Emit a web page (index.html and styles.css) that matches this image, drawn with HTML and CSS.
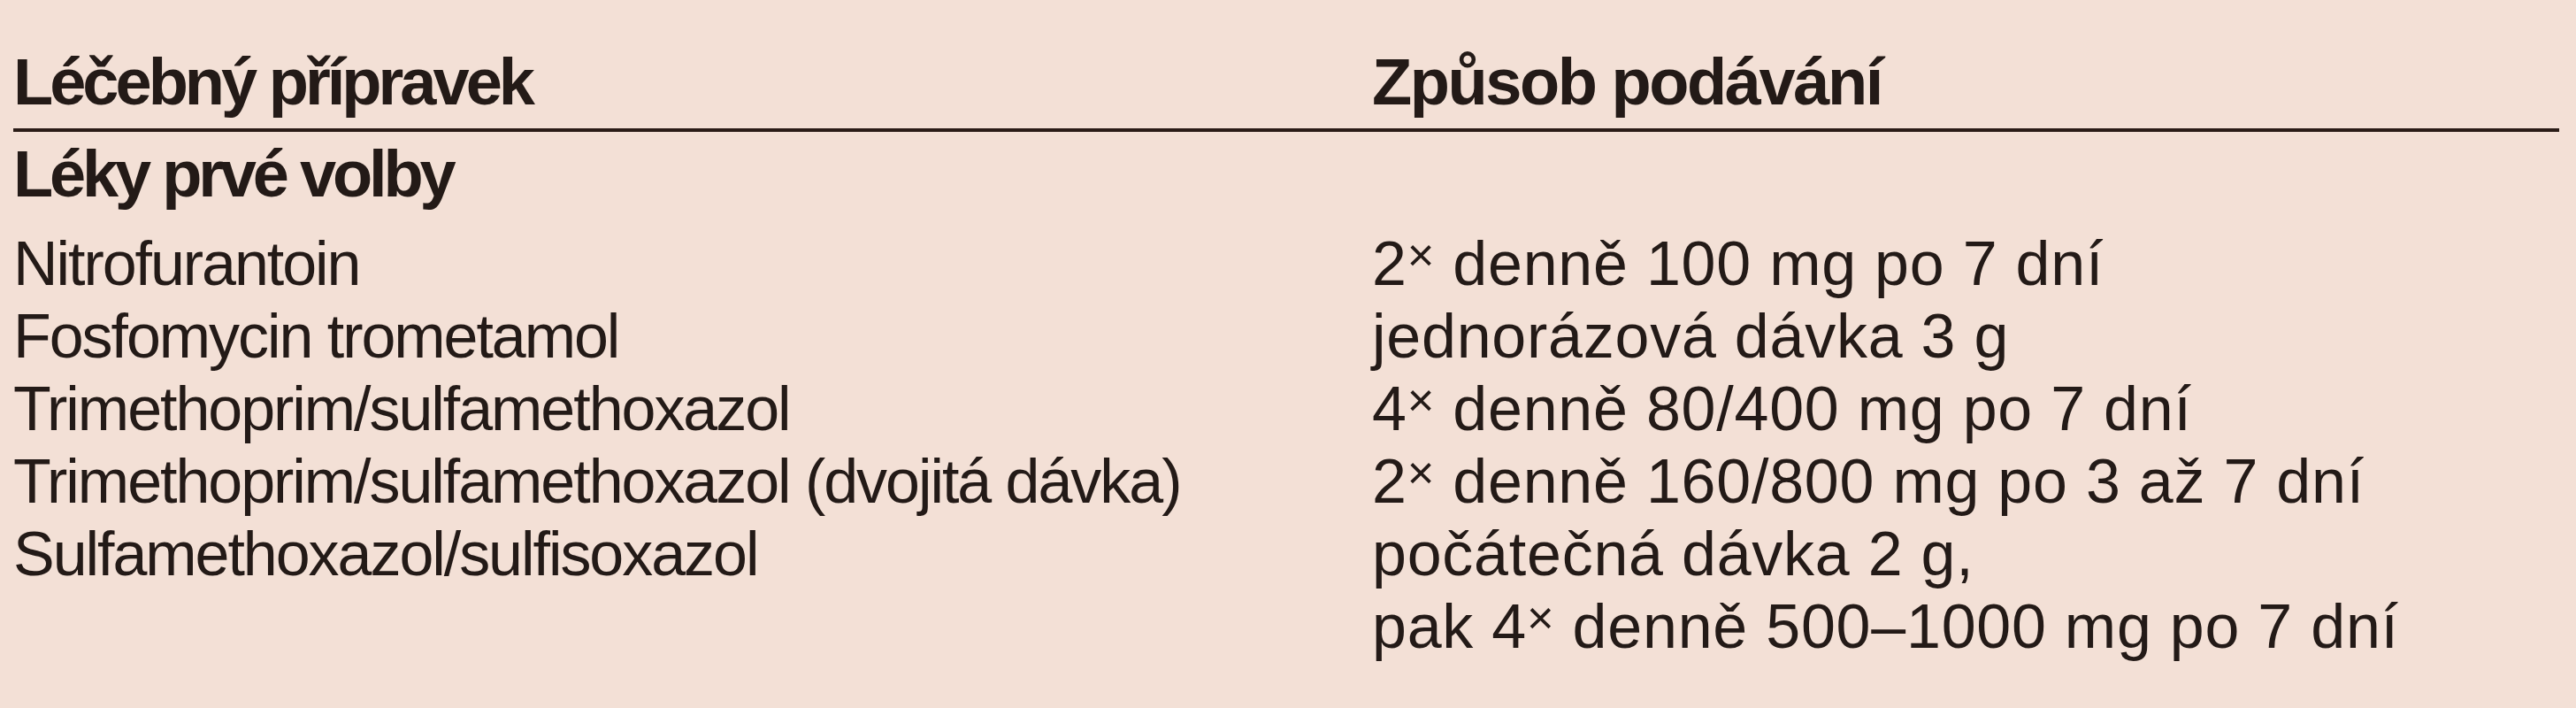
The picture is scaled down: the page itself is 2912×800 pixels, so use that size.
FILE: index.html
```html
<!DOCTYPE html>
<html lang="cs">
<head>
<meta charset="utf-8">
<title>Léčebný přípravek</title>
<link rel="stylesheet" href="styles.css">
</head>
<body>
<div class="table">
  <div class="grid head">
    <div class="cell head-left">Léčebný přípravek</div>
    <div class="cell head-right">Způsob podávání</div>
  </div>
  <div class="section">Léky prvé volby</div>
  <div class="grid body">
    <div class="cell drug">Nitrofurantoin</div>
    <div class="cell dose">2<span class="times">×</span> denně 100 mg po 7 dní</div>
    <div class="cell drug">Fosfomycin trometamol</div>
    <div class="cell dose">jednorázová dávka 3 g</div>
    <div class="cell drug">Trimethoprim/sulfamethoxazol</div>
    <div class="cell dose">4<span class="times">×</span> denně 80/400 mg po 7 dní</div>
    <div class="cell drug">Trimethoprim/sulfamethoxazol (dvojitá dávka)</div>
    <div class="cell dose">2<span class="times">×</span> denně 160/800 mg po 3 až 7 dní</div>
    <div class="cell drug">Sulfamethoxazol/sulfisoxazol</div>
    <div class="cell dose">počátečná dávka 2 g,<br>pak 4<span class="times">×</span> denně 500–1000 mg po 7 dní</div>
  </div>
</div>
</body>
</html>
```
FILE: styles.css
```css
html, body {
  margin: 0;
  padding: 0;
  background: #f3e0d6;
}
body {
  width: 2912px;
  height: 800px;
  overflow: hidden;
  color: #231a17;
  font-family: "Liberation Sans", Arial, sans-serif;
}
.table {
  padding: 0 19px 0 15px;
}
.grid {
  display: grid;
  grid-template-columns: 1536px 1fr;
}
.cell {
  white-space: nowrap;
}
.head {
  padding-top: 52px;
  padding-bottom: 12px;
  border-bottom: 4px solid #2a1c17;
  font-weight: bold;
  font-size: 74px;
  line-height: 81px;
}
.head-left {
  letter-spacing: -4px;
}
.head-right {
  letter-spacing: -2.45px;
}
.section {
  padding-top: 7px;
  font-weight: bold;
  font-size: 74px;
  line-height: 81px;
  letter-spacing: -4.2px;
}
.body {
  margin-top: 20px;
  font-size: 70px;
  line-height: 82px;
}
.drug {
  letter-spacing: -2.05px;
}
.dose {
  letter-spacing: 0.75px;
}
.times {
  font-size: 0.75em;
  vertical-align: 0.3em;
  line-height: 0;
}
```
